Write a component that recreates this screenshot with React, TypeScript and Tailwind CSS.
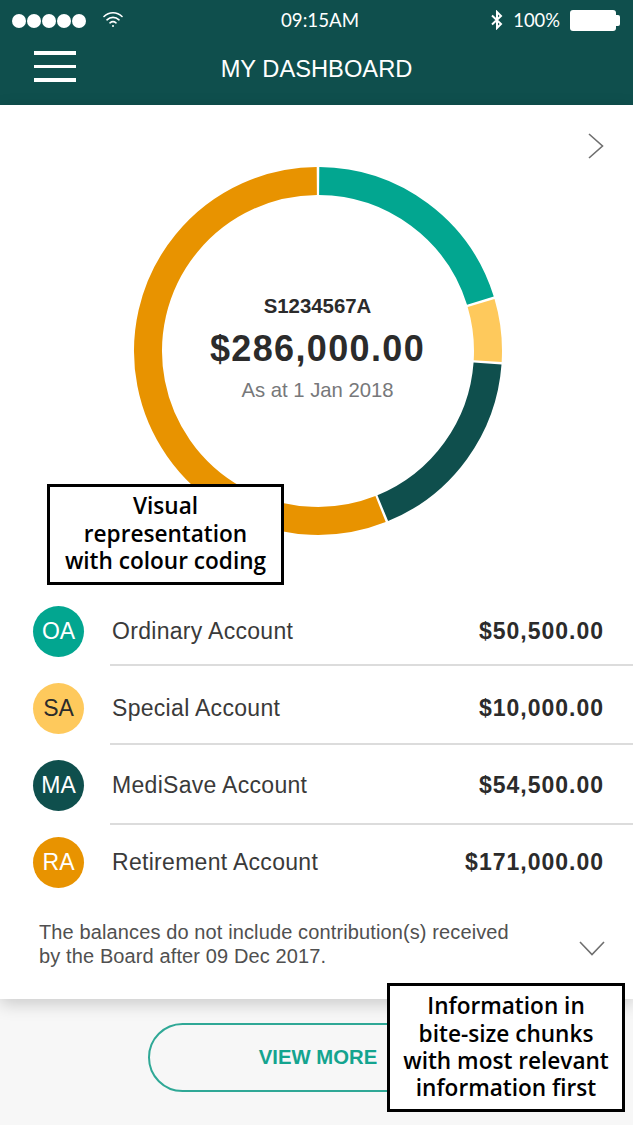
const sans = { fontFamily: '"Liberation Sans", Arial, sans-serif' }
const callout = { fontFamily: '"Open Sans", sans-serif' }

const accounts = [
    { code: 'OA', name: 'Ordinary Account', amount: '$50,500.00', badge: 'bg-[#02a690] text-white', line: 'mt-[7px] mb-[17px]' },
    { code: 'SA', name: 'Special Account', amount: '$10,000.00', badge: 'bg-[#fec95c] text-[#2b2b2b]', line: 'mt-[9px] mb-[15px]' },
    { code: 'MA', name: 'MediSave Account', amount: '$54,500.00', badge: 'bg-[#0f4f4d] text-white', line: 'mt-[12px] mb-[12px]' },
    { code: 'RA', name: 'Retirement Account', amount: '$171,000.00', badge: 'bg-[#e89300] text-white', line: '' },
]

const segments = [
    { from: 0.4, to: 72.8, color: '#02a690' },
    { from: 73.6, to: 93.4, color: '#fec95c' },
    { from: 94.2, to: 157.6, color: '#0f4f4d' },
    { from: 158.4, to: 359.6, color: '#e89300' },
]

function arc(from: number, to: number, r: number) {
    const pt = (deg: number) => {
        const a = (deg * Math.PI) / 180
        return `${(185 + r * Math.sin(a)).toFixed(2)} ${(185 - r * Math.cos(a)).toFixed(2)}`
    }
    return `M ${pt(from)} A ${r} ${r} 0 ${to - from > 180 ? 1 : 0} 1 ${pt(to)}`
}

function StatusBar() {
    return (
        <div className="flex h-[41px] items-center justify-between pl-[12px] pr-[13px] text-white" style={{ fontFamily: 'Lato, sans-serif' }}>
            <div className="flex w-[180px] items-center">
                <div className="flex gap-[1px]">
                    {[0, 1, 2, 3, 4].map((i) => (
                        <span key={i} className="h-[14px] w-[14px] rounded-full bg-white" />
                    ))}
                </div>
                <svg width="20" height="18" viewBox="0 0 20 18" fill="none" stroke="white" strokeWidth="1.6" strokeLinecap="round" className="mb-[3px] ml-[17px]">
                    <path d="M1 6.5C6 1.5 14 1.5 19 6.5" />
                    <path d="M4 9.8C7.4 6.6 12.6 6.6 16 9.8" />
                    <path d="M7 12.8C8.8 11.4 11.2 11.4 13 12.8" />
                    <circle cx="10" cy="16" r="1" fill="white" stroke="none" />
                </svg>
            </div>
            <span className="ml-[8px] pb-[1px] text-[18.7px]">09:15AM</span>
            <div className="flex w-[180px] items-center justify-end">
                <svg width="12" height="20" viewBox="0 0 12 20" fill="none" stroke="white" strokeWidth="2" className="mr-[10px]">
                    <path d="M1 5.5L10 14L6 18V2L10 6L1 14.5" />
                </svg>
                <span className="text-[18.4px]">100%</span>
                <div className="ml-[10px] flex items-center">
                    <div className="h-[21px] w-[46px] rounded-[3px] bg-white" />
                    <div className="h-[11px] w-[4px] rounded-r-[2px] bg-white" />
                </div>
            </div>
        </div>
    )
}

function TitleBar() {
    return (
        <div className="relative flex h-[64px] items-start justify-center pt-[12px]">
            <div className="absolute left-[34px] top-[10px] flex flex-col gap-[10px]">
                <span className="h-[3.5px] w-[42px] bg-white" />
                <span className="h-[3.5px] w-[42px] bg-white" />
                <span className="h-[3.5px] w-[42px] bg-white" />
            </div>
            <h1 className="text-[23.7px] leading-[32px] text-white" style={sans}>MY DASHBOARD</h1>
        </div>
    )
}

function Donut() {
    return (
        <div className="relative mx-auto h-[370px] w-[370px] translate-x-[1px]">
            <svg width="370" height="370" viewBox="0 0 370 370">
                {segments.map((s) => (
                    <path key={s.color} d={arc(s.from, s.to, 170)} fill="none" stroke={s.color} strokeWidth="28" />
                ))}
            </svg>
            <div className="absolute inset-0 flex flex-col items-center pt-[129px]">
                <p className="text-[20.4px] font-bold leading-[22px] text-[#2b2b2b]">S1234567A</p>
                <p className="mt-[11px] text-[36px] font-bold leading-[42px] tracking-[1.35px] text-[#2b2b2b]">$286,000.00</p>
                <p className="mt-[8px] text-[20.3px] leading-[24px] text-[#77787a]">As at 1 Jan 2018</p>
            </div>
        </div>
    )
}

function AccountRow({ code, name, amount, badge, line }: { code: string; name: string; amount: string; badge: string; line: string }) {
    return (
        <div>
            <div className="flex h-[51px] items-center pl-[33px] pr-[29px]">
                <span className={`flex h-[51px] w-[51px] shrink-0 items-center justify-center rounded-full text-[23px] ${badge}`}>{code}</span>
                <span className="ml-[28px] flex-1 text-[23px] tracking-[0.3px] text-[#3a3a3a]">{name}</span>
                <span className="text-[23px] font-bold tracking-[1px] text-[#2b2b2b]">{amount}</span>
            </div>
            {line && <div className={`ml-[110px] h-[2px] bg-[#dcdcdc] ${line}`} />}
        </div>
    )
}

export default function App() {
    return (
        <div className="relative h-[1125px] w-[633px] overflow-hidden bg-[#f7f7f7]" style={sans}>
            <header className="bg-[#0f4f4d]">
                <StatusBar />
                <TitleBar />
            </header>

            <section className="relative bg-white pt-[61px] shadow-[0_5px_16px_rgba(0,0,0,0.18)]">
                <svg width="18" height="28" viewBox="0 0 18 28" fill="none" stroke="#6f6f6f" strokeWidth="1.6" className="absolute right-[28px] top-[27px]">
                    <path d="M2 2L15.5 14L2 26" />
                </svg>
                <Donut />
                <div className="mt-[69.5px]">
                    {accounts.map((a) => (
                        <AccountRow key={a.code} {...a} />
                    ))}
                </div>
                <div className="flex h-[111.5px] items-start justify-between pl-[39px] pr-[28px] pt-[32.5px]">
                    <p className="text-[20px] leading-[24px] tracking-[0.12px] text-[#505050]">
                        The balances do not include contribution(s) received
                        <br />
                        by the Board after 09 Dec 2017.
                    </p>
                    <svg width="26" height="15" viewBox="0 0 26 15" fill="none" stroke="#6f6f6f" strokeWidth="1.6" className="mt-[21px]">
                        <path d="M1 1L13 13.5L25 1" />
                    </svg>
                </div>
            </section>

            <div className="mt-[24px] flex justify-center pl-[3px]">
                <button type="button" className="h-[69px] w-[340px] rounded-full border-2 border-[#2fa896] text-[20.3px] font-bold text-[#14a48f]">
                    VIEW MORE
                </button>
            </div>

            <div className="absolute left-[47px] top-[484px] flex h-[101px] w-[237px] items-center justify-center border-[3px] border-black bg-white pb-[2px] text-center text-[22.6px] font-semibold leading-[27.4px] text-black" style={callout}>
                <p>Visual<br />representation<br />with colour coding</p>
            </div>
            <div className="absolute left-[387px] top-[983px] flex h-[129px] w-[238px] items-center justify-center border-[3px] border-black bg-white pb-[1px] text-center text-[22.6px] font-semibold leading-[27.4px] text-black" style={callout}>
                <p>Information in<br />bite-size chunks<br />with most relevant<br />information first</p>
            </div>
        </div>
    )
}
